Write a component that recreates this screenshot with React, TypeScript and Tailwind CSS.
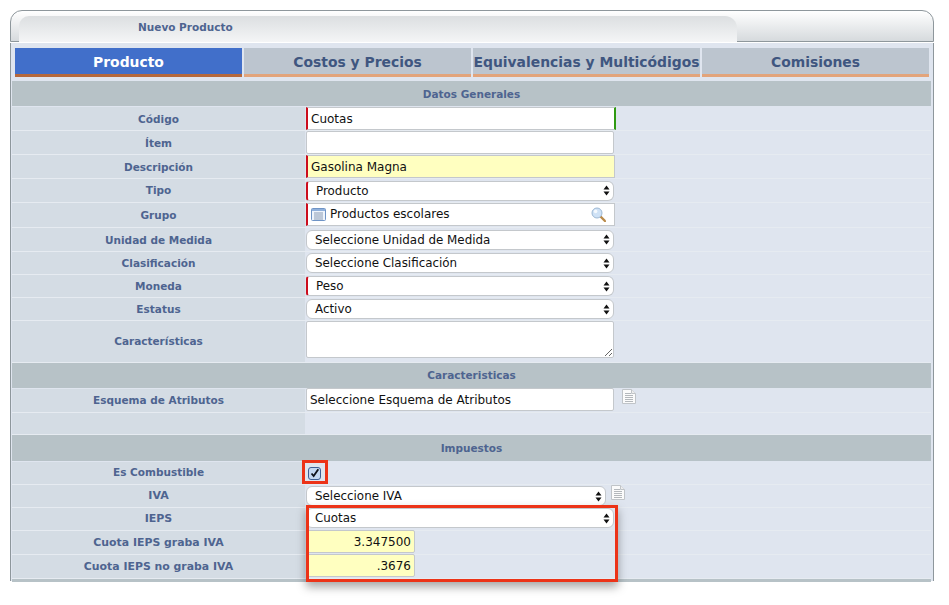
import React from 'react';

const font = "font-['DejaVu_Sans',Verdana,sans-serif]";

const tabs = ['Producto', 'Costos y Precios', 'Equivalencias y Multicódigos', 'Comisiones'];

const Section = ({ title, h = 'h-[25px]', pt = '' }: { title: string; h?: string; pt?: string }) => (
    <div className={`${h} ${pt} mb-px bg-[#b7c2c7] flex items-center justify-center text-[10.5px] font-bold text-[#4e6490]`}>
        {title}
    </div>
);

const Row = ({ label, h, lp = '', size = 'text-[10.5px]', children }: { label: string; h: string; lp?: string; size?: string; children?: React.ReactNode }) => (
    <div className={`${h} flex border-b border-[#e6ebf1]`}>
        <div className={`w-[293px] shrink-0 bg-[#d4dce4] flex items-center justify-center font-bold text-[#4e6490] ${size} ${lp}`}>
            {label}
        </div>
        <div className="flex-1 pl-px flex items-center">{children}</div>
    </div>
);

const Arrows = () => (
    <svg width="7" height="11" viewBox="0 0 7 11" className="shrink-0">
        <path d="M3.5 0.5 L6.5 4.5 H0.5 Z M3.5 10.5 L0.5 6.5 H6.5 Z" fill="#111" />
    </svg>
);

const Select = ({ value, required, w = 'w-[308px]', mb = '' }: { value: string; required?: boolean; w?: string; mb?: string }) => (
    <div
        className={`${w} ${mb} h-[20px] shrink-0 bg-white border border-[#c4c8cc] flex items-center justify-between pl-2 pr-[3px] text-[11.9px] text-[#111] ${
            required ? 'rounded-r-[6px] rounded-l-[3px] border-l-2 border-l-[#cc0d1d]' : 'rounded-[6px]'
        }`}
    >
        <span className="pt-[2px]">{value}</span>
        <Arrows />
    </div>
);

const Input = ({ children, className = '', w = 'w-[309px]', bg = 'bg-white' }: { children?: React.ReactNode; className?: string; w?: string; bg?: string }) => (
    <div className={`${w} ${bg} h-[23px] shrink-0 border border-[#c4c8cc] flex items-center text-[12px] text-[#111] ${className}`}>
        {children}
    </div>
);

const DocIcon = ({ className = '' }: { className?: string }) => (
    <svg width="14" height="15" viewBox="0 0 14 15" className={`shrink-0 ${className}`}>
        <path d="M0.5 0.5 H9.5 L13.5 4.5 V14.5 H0.5 Z" fill="#fbfbfb" stroke="#c0c4c8" />
        <path d="M9.5 0.5 V4.5 H13.5" fill="#eee" stroke="#c0c4c8" />
        <path d="M3 4.5 H9 M3 6.5 H11 M3 8.5 H11 M3 10.5 H11 M3 12.5 H11" stroke="#b4b8bc" />
    </svg>
);

const ListIcon = () => (
    <svg width="15" height="13" viewBox="0 0 15 13" className="shrink-0">
        <rect x="0.5" y="0.5" width="14" height="12" rx="1" fill="#eef4fc" stroke="#6f94c6" />
        <rect x="1" y="1" width="13" height="2" fill="#8fb0dc" />
        <path d="M3 5 H12 M3 7 H12 M3 9 H12 M3 11 H12" stroke="#8a9bb4" />
    </svg>
);

const SearchIcon = () => (
    <svg width="15" height="15" viewBox="0 0 15 15" className="shrink-0">
        <path d="M9 9 L14 14" stroke="#b98a4a" strokeWidth="2.4" strokeLinecap="round" />
        <circle cx="6" cy="6" r="5" fill="#cfe2f6" stroke="#9db8d4" />
        <circle cx="4.6" cy="4.4" r="1.8" fill="#f4f9fe" />
    </svg>
);

export default function App() {
    return (
        <div className={`relative w-[949px] h-[605px] bg-white overflow-hidden pt-[10px] pl-[10px] ${font}`}>
            {/* Title bar */}
            <div className="w-[924px] h-[32px] rounded-t-[12px] border border-[#8e979c] bg-gradient-to-b from-white to-[#d6dadd] pl-2 pt-[5px]">
                <div className="w-[718px] h-[26px] rounded-tl-[10px] rounded-tr-[12px] bg-gradient-to-b from-[#dcdfe1] to-[#f4f5f6] text-[10.5px] font-bold text-[#4e6490] pl-[119px] pt-[4px]">
                    Nuevo Producto
                </div>
            </div>

            {/* Body */}
            <div className="w-[924px] h-[538px] mt-px border-x border-[#8e979c] bg-[#dfe5ef]">
                <div className="h-[38px] pt-[5px] pl-1 flex gap-[2px]">
                    {tabs.map((t, i) => (
                        <div
                            key={t}
                            className={`w-[227px] h-[29px] pt-[2px] flex items-center justify-center text-[13.9px] font-bold border-b-[3px] whitespace-nowrap ${
                                i === 0
                                    ? 'bg-[#416fca] text-white border-[#b5683c]'
                                    : 'bg-[#bcc5cf] text-[#3f5680] border-[#e2a47b]'
                            }`}
                        >
                            {t}
                        </div>
                    ))}
                </div>

                <div className="pl-px pr-[2px]">
                    <Section title="Datos Generales" pt="pt-[2px]" />
                    <Row label="Código" h="h-[24px]" lp="pt-[2px]">
                        <Input w="w-[310px]" className="border-l-2 border-l-[#cc0d1d] border-r-2 border-r-[#2f9a12] pl-[3px]">Cuotas</Input>
                    </Row>
                    <Row label="Ítem" h="h-[24px]" lp="pt-[2px]">
                        <Input w="w-[308px]" className="rounded-[2px]" />
                    </Row>
                    <Row label="Descripción" h="h-[24px]" lp="pt-[2px]">
                        <Input bg="bg-[#ffffc0]" className="border-l-2 border-l-[#cc0d1d] pl-[3px]">Gasolina Magna</Input>
                    </Row>
                    <Row label="Tipo" h="h-[24px]">
                        <Select value="Producto" required />
                    </Row>
                    <Row label="Grupo" h="h-[25px]" lp="pt-[2px]">
                        <Input className="border-l-2 border-l-[#cc0d1d] pl-[3px] pr-[8px] gap-[3px] mb-[2px]">
                            <ListIcon />
                            <span className="flex-1 pl-px">Productos escolares</span>
                            <SearchIcon />
                        </Input>
                    </Row>
                    <Row label="Unidad de Medida" h="h-[24px]" lp="pt-[2px]">
                        <Select value="Seleccione Unidad de Medida" />
                    </Row>
                    <Row label="Clasificación" h="h-[23px]" lp="pt-[2px]">
                        <Select value="Seleccione Clasificación" />
                    </Row>
                    <Row label="Moneda" h="h-[23px]" lp="pt-[2px]">
                        <Select value="Peso" required />
                    </Row>
                    <Row label="Estatus" h="h-[23px]" lp="pt-[2px]">
                        <Select value="Activo" />
                    </Row>
                    <Row label="Características" h="h-[42px]">
                        <textarea className="w-[308px] h-[37px] self-start bg-white border border-[#c4c8cc] rounded-[2px] block" />
                    </Row>
                    <Section title="Caracteristicas" />
                    <Row label="Esquema de Atributos" h="h-[24px]">
                        <Input w="w-[308px]" className="pl-[3px] rounded-[2px] mb-[2px]">Seleccione Esquema de Atributos</Input>
                        <DocIcon className="ml-[8px] mb-[9px]" />
                    </Row>
                    <Row label="" h="h-[22px]" />
                    <Section title="Impuestos" h="h-[26px]" pt="pt-[2px]" />
                    <Row label="Es Combustible" h="h-[23px]">
                        <div className="ml-[2px] w-[13px] h-[13px] rounded-[3px] bg-[#c5d8f2] border border-[#3f5f94] flex items-center justify-center">
                            <svg width="13" height="13" viewBox="0 0 13 13">
                                <path d="M3 6.5 L5.5 9.5 L11 1.5" fill="none" stroke="#10131c" strokeWidth="2.2" />
                            </svg>
                        </div>
                    </Row>
                    <Row label="IVA" h="h-[23px]" size="text-[11px]">
                        <Select value="Seleccione IVA" w="w-[300px]" />
                        <DocIcon className="ml-[5px] mb-[7px]" />
                    </Row>
                    <Row label="IEPS" h="h-[23px]" size="text-[11px]">
                        <Select value="Cuotas" mb="mb-[2px]" />
                    </Row>
                    <Row label="Cuota IEPS graba IVA" h="h-[24px]" size="text-[10.9px]" lp="pt-[2px]">
                        <Input w="w-[109px]" bg="bg-[#ffffc0]" className="justify-end pr-[3px] rounded-[2px] mb-[2px]">3.347500</Input>
                    </Row>
                    <Row label="Cuota IEPS no graba IVA" h="h-[24px]" size="text-[10.9px]" lp="pt-[2px]">
                        <Input w="w-[109px]" bg="bg-[#ffffc0]" className="justify-end pr-[3px] rounded-[2px] mb-[2px]">.3676</Input>
                    </Row>
                    <div className="h-[3px] bg-[#b7c2c7]" />
                </div>
            </div>

            {/* Red callouts */}
            <div className="absolute left-[302px] top-[460px] w-[26px] h-[24px] border-[3px] border-[#ec3318]" />
            <div className="absolute left-[306px] top-[505px] w-[312px] h-[77px] border-[3px] border-[#ec3318] shadow-[0_5px_9px_rgba(0,0,0,0.35)]" />
        </div>
    );
}
